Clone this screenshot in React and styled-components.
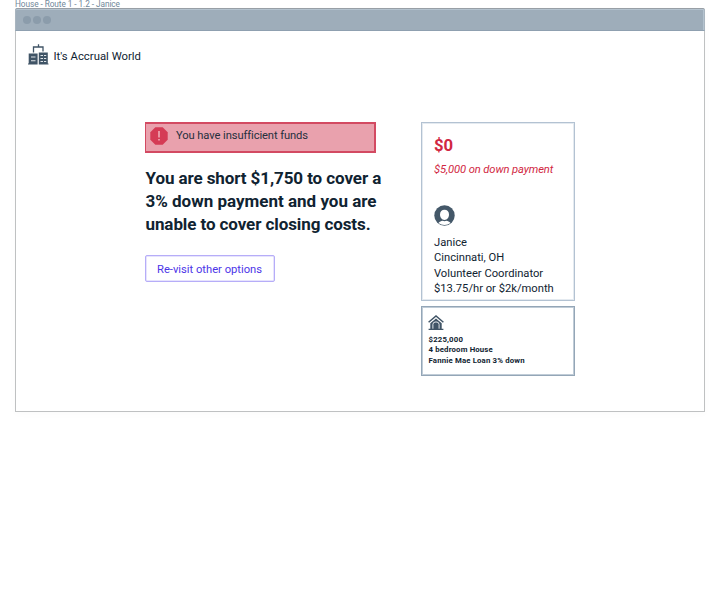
import React from "react";
import styled, { createGlobalStyle } from "styled-components";

const GlobalStyle = createGlobalStyle`
  * { box-sizing: border-box; }
  body { margin: 0; background: #fff; font-family: Roboto, "Liberation Sans", sans-serif; color: #102331; }
  h1, h2, p { margin: 0; font-weight: inherit; }
  svg { display: block; flex: none; }
`;

const Page = styled.div`
  width: 720px;
  height: 600px;
  padding: 0 15px;
  overflow: hidden;
`;
const Caption = styled.p`
  height: 9px;
  font-size: 8.3px;
  line-height: 9px;
  letter-spacing: -0.08px;
  color: #71879a;
  white-space: nowrap;
`;
const Window = styled.section`
  width: 690px;
  height: 403px;
  border: 1px solid #bfc1c2;
  box-shadow: 0 2px 8px rgba(0, 0, 0, 0.02);
`;
const TitleBar = styled.div`
  display: flex;
  align-items: center;
  gap: 2px;
  height: 23px;
  margin: -2px -1px 0;
  padding: 0 0 0 7px;
  background: #9eadba;
  border: 1px solid #a9b5bf;
  border-top-color: #989fa6;
  border-bottom-color: #8fa0b0;
  border-radius: 2px 2px 0 0;
  box-shadow: inset 0 1px 0 #b4c3cf, inset -1px 0 0 #b4c3cf;
`;
const Dot = styled.span`
  width: 8px;
  height: 8px;
  border-radius: 50%;
  background: #8b9cab;
`;
const Brand = styled.header`
  display: flex;
  gap: 4.5px;
  padding: 13px 0 0 12px;
  height: 91px;
`;
const Line = styled.p`
  font-size: ${(p) => p.$size}px;
  line-height: ${(p) => p.$height}px;
  letter-spacing: ${(p) => p.$track || 0}px;
  white-space: nowrap;
`;
const BrandName = styled(Line)`
  padding-top: 5px;
`;
const Content = styled.main`
  display: flex;
  align-items: flex-start;
  padding-left: 129px;
`;
const Message = styled.div`
  width: 275.5px;
`;
const Alert = styled.div`
  display: flex;
  gap: 8px;
  width: 231px;
  height: 31px;
  padding: 3px 0 0 4px;
  border: 2px solid #d34a62;
  border-left-width: 1px;
  background: #e9a1ad;
  color: #26303d;
`;
const AlertText = styled(Line)`
  padding-top: 1px;
`;
const Headline = styled.h1`
  padding: 14px 0 0 0.5px;
  font-weight: 700;
`;
const Button = styled.button`
  display: block;
  width: 130px;
  height: 27px;
  margin-top: 19px;
  padding: 0 0 2px 11px;
  border: 1px solid #b6adf8;
  border-radius: 2px;
  box-shadow: inset 0 0 0 0.5px #cfc9fb;
  background: #fff;
  color: #4c35e8;
  font: inherit;
  text-align: left;
`;
const Side = styled.aside`
  display: flex;
  flex-direction: column;
  gap: 5px;
  width: 154.5px;
`;
const Profile = styled.section`
  height: 179px;
  padding: 13px 0 0 12.5px;
  border: 1px solid #b3c2d2;
  box-shadow: inset 0 0 0 1px #e4eaf0;
`;
const Balance = styled.div`
  height: 69px;
  color: #d12742;
`;
const Amount = styled(Line)`
  font-weight: 700;
`;
const Spent = styled(Line)`
  font-style: italic;
  padding-top: 6px;
`;
const Person = styled.div`
  padding-top: 9px;
`;
const Property = styled.section`
  height: 70px;
  padding: 8px 0 0 6.5px;
  border: 1px solid #94a6b7;
  box-shadow: inset 0 0 0 1px #c0ccd7;
  font-weight: 700;
`;
const Details = styled.div`
  padding: 4px 0 0 0.5px;
`;

const BuildingsIcon = () => (
  <svg width="21" height="21" viewBox="0 0 21 21">
    <path d="M5.5 8.500V3H15V7.500M10.500 3V.3" fill="none" stroke="#405466" strokeWidth="1.3" />
    <path fill="#405466" d="M.7 9.500h8.900v11H0V19.500h.7zM10.800 8.500h9v11h.7v1H10.800z" />
    <path stroke="#dfe4e8" strokeWidth="1.1" d="M3 13h4.500M3 16.800h4.500M12.500 11.500h2.500M16 11.500h2.200M12.500 14.500h2.500M16 14.500h2.200M12.500 17.500h2.500M16 17.500h2.200" />
  </svg>
);
const AlertIcon = () => (
  <svg width="18" height="18" viewBox="0 0 18 18">
    <path fill="#d53b55" d="M5.300.3h7.400l5 5v7.400l-5 5H5.300l-5-5V5.300z" />
    <path stroke="#f1b2bc" strokeWidth="1.5" d="M9 4v6.500M9 12v1.600" />
  </svg>
);
const PersonIcon = () => (
  <svg width="21" height="21" viewBox="0 0 21 21">
    <circle cx="10.500" cy="10.500" r="10.200" fill="#445869" />
    <path fill="#fff" d="M10.500 4.700c2.700 0 4.500 2 4.500 4.800 0 3-1.800 5.400-4.500 5.400S6 12.500 6 9.500c0-2.800 1.800-4.800 4.500-4.800z" />
    <path fill="#fff" d="M4.500 18c1.200-1.500 2.600-2.100 4-2.300 1.300.6 2.700.6 4 0 1.400.2 2.800.8 4 2.300-1.700 1.300-3.800 2-6 2s-4.300-.7-6-2z" />
  </svg>
);
const HouseIcon = () => (
  <svg width="16" height="16" viewBox="0 0 16 16">
    <path d="M.6 7.200 8 1l7.400 6.200" fill="none" stroke="#405466" strokeWidth="1.500" />
    <path fill="#405466" d="M2.300 8.300 8 3.600l5.700 4.700v5.400h1.700V15H.6v-1.300h1.700z" />
    <path fill="none" stroke="#e3e8ec" strokeWidth="1" d="M4.900 13.700V9.300Q4.900 6.900 8 6.900T11.100 9.300v4.400" />
  </svg>
);

export default function App() {
  return (
    <Page>
      <GlobalStyle />
      <Caption>House - Route 1 - 1.2 - Janice</Caption>
      <Window>
        <TitleBar><Dot /><Dot /><Dot /></TitleBar>
        <Brand>
          <BuildingsIcon />
          <BrandName $size={11.3} $height={16} $track={0.02}>It's Accrual World</BrandName>
        </Brand>
        <Content>
          <Message>
            <Alert>
              <AlertIcon />
              <AlertText $size={11.2} $height={15} $track={-0.1}>You have insufficient funds</AlertText>
            </Alert>
            <Headline>
              <Line as="div" $size={17} $height={23} $track={-0.09}>You are short $1,750 to cover a</Line>
              <Line as="div" $size={17} $height={23} $track={0}>3% down payment and you are</Line>
              <Line as="div" $size={17} $height={23} $track={-0.09}>unable to cover closing costs.</Line>
            </Headline>
            <Button><Line as="span" $size={11.2} $height={15}>Re-visit other options</Line></Button>
          </Message>
          <Side>
            <Profile>
              <Balance>
                <Amount $size={16.7} $height={20}>$0</Amount>
                <Spent $size={11.2} $height={15} $track={-0.1}>$5,000 on down payment</Spent>
              </Balance>
              <PersonIcon />
              <Person>
                <Line $size={11.2} $height={15.33}>Janice</Line>
                <Line $size={11.2} $height={15.33}>Cincinnati, OH</Line>
                <Line $size={11.2} $height={15.33}>Volunteer Coordinator</Line>
                <Line $size={11.2} $height={15.33}>$13.75/hr or $2k/month</Line>
              </Person>
            </Profile>
            <Property>
              <HouseIcon />
              <Details>
                <Line $size={7.8} $height={10.3} $track={0.16}>$225,000</Line>
                <Line $size={7.8} $height={10.3} $track={0.15}>4 bedroom House</Line>
                <Line $size={7.8} $height={10.3} $track={0.16}>Fannie Mae Loan 3% down</Line>
              </Details>
            </Property>
          </Side>
        </Content>
      </Window>
    </Page>
  );
}
